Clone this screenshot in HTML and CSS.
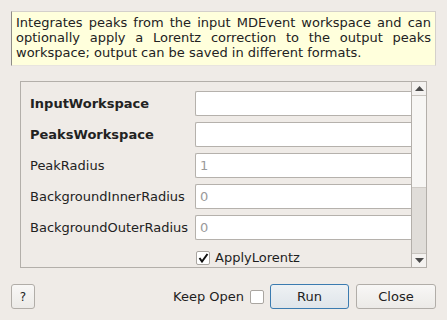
FILE: index.html
```html
<!DOCTYPE html>
<html lang="en">

<head>
    <meta charset="UTF-8">
    <title>IntegratePeaksMD</title>
    <link rel="stylesheet" href="styles.css">
</head>

<body>
    <div class="janela">
        <p class="descricao">Integrates peaks from the input MDEvent workspace and can optionally apply a Lorentz correction to the output peaks workspace; output can be saved in different formats.</p>

        <div class="quadro">
            <div class="campos">
                <label class="rotulo negrito">InputWorkspace</label>
                <input class="entrada" type="text">

                <label class="rotulo negrito">PeaksWorkspace</label>
                <input class="entrada" type="text">

                <label class="rotulo">PeakRadius</label>
                <input class="entrada" type="text" placeholder="1">

                <label class="rotulo">BackgroundInnerRadius</label>
                <input class="entrada" type="text" placeholder="0">

                <label class="rotulo">BackgroundOuterRadius</label>
                <input class="entrada" type="text" placeholder="0">

                <span></span>
                <div class="marcar">
                    <span class="caixa">
                        <svg width="11" height="10" viewBox="0 0 11 10"><path d="M1.5 5 L4 8.5 L9.5 1" fill="none" stroke="#111" stroke-width="2"/></svg>
                    </span>
                    <span>ApplyLorentz</span>
                </div>
            </div>
            <div class="rolagem">
                <div class="seta">
                    <svg width="9" height="5" viewBox="0 0 9 5"><path d="M0 5 L4.5 0 L9 5 Z" fill="#4a4a4a"/></svg>
                </div>
                <div class="polegar"></div>
                <div class="trilho"></div>
                <div class="seta">
                    <svg width="9" height="5" viewBox="0 0 9 5"><path d="M0 0 L4.5 5 L9 0 Z" fill="#4a4a4a"/></svg>
                </div>
            </div>
        </div>

        <div class="rodape">
            <button class="botao ajuda">?</button>
            <span class="espaco"></span>
            <span class="manter">Keep Open</span>
            <span class="caixa"></span>
            <button class="botao principal">Run</button>
            <button class="botao">Close</button>
        </div>
    </div>
</body>

</html>
```

FILE: styles.css
```css
* {
    margin: 0;
    padding: 0;
    box-sizing: border-box;
    font-family: "DejaVu Sans", sans-serif;
}

body {
    background-color: #efebe7;
    width: 447px;
    height: 320px;
    overflow: hidden;
    font-size: 13px;
    color: #1e1e1e;
}

.janela {
    display: flex;
    flex-direction: column;
}

.descricao {
    margin: 11px 11px 0 11px;
    height: 55px;
    padding: 3px 4px 0 4px;
    background-color: #ffffdc;
    border: 1px solid #d4d0cb;
    border-left-color: #8e8b87;
    border-bottom-color: #e8e4df;
    text-align: justify;
    line-height: 15px;
    font-size: 13px;
    color: #222;
}

.quadro {
    margin: 15px 20px 0 20px;
    height: 187px;
    border: 1px solid #b3afaa;
    display: flex;
    overflow: hidden;
}

.campos {
    flex: 1;
    display: grid;
    grid-template-columns: 165px 1fr;
    grid-auto-rows: 25px;
    row-gap: 6px;
    padding: 9px 0 0 9px;
    align-items: center;
}

.rotulo {
    color: #222;
}

.negrito {
    font-weight: bold;
}

.entrada {
    height: 25px;
    width: 100%;
    border: 1px solid #b5b1ac;
    border-right: none;
    border-radius: 2px 0 0 2px;
    background-color: white;
    padding: 0 4px;
    font-size: 13px;
    outline: none;
}

.entrada::placeholder {
    color: #9a9a9a;
}

.marcar {
    display: flex;
    align-items: center;
    gap: 5px;
    padding-left: 1px;
    align-self: start;
    margin-top: 4px;
}

.caixa {
    width: 14px;
    height: 14px;
    border: 1px solid #aaa6a1;
    border-radius: 2px;
    background-color: white;
    display: flex;
    align-items: center;
    justify-content: center;
}

.rolagem {
    width: 15px;
    border-left: 1px solid #b3afaa;
    display: flex;
    flex-direction: column;
    background-color: #e0ddd9;
}

.seta {
    height: 14px;
    display: flex;
    align-items: center;
    justify-content: center;
    background-color: #f4f2f0;
}

.seta:first-child {
    border-bottom: 1px solid #c8c4bf;
}

.seta:last-child {
    border-top: 1px solid #c8c4bf;
}

.polegar {
    height: 92px;
    background-color: #f7f6f4;
    border-bottom: 1px solid #cfcbc6;
}

.trilho {
    flex: 1;
}

.rodape {
    margin: 16px 11px 0 11px;
    display: flex;
    align-items: center;
}

.espaco {
    flex: 1;
}

.botao {
    height: 25px;
    width: 80px;
    border: 1px solid #b1ada8;
    border-radius: 3px;
    background: linear-gradient(#f8f7f6, #eceae7);
    font-size: 13px;
    color: #222;
    margin-left: 7px;
}

.ajuda {
    width: 24px;
    margin-left: 0;
    font-size: 12px;
}

.principal {
    width: 79px;
    margin-left: 6px;
    border-color: #3b7bb0;
    background: linear-gradient(#eef1f4, #dfe5ea);
}

.manter {
    margin-right: 6px;
}
```
